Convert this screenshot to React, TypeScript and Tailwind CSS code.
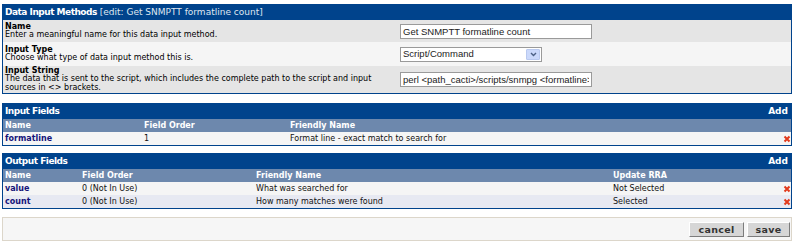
import React from 'react';

// Cacti-style "Data Input Methods" edit page

type Col = { label: string; width: string };

const INPUT_COLS: Col[] = [
  { label: 'Name', width: 'w-[139px]' },
  { label: 'Field Order', width: 'w-[146px]' },
  { label: 'Friendly Name', width: 'flex-1' },
];

const OUTPUT_COLS: Col[] = [
  { label: 'Name', width: 'w-[77px]' },
  { label: 'Field Order', width: 'w-[174px]' },
  { label: 'Friendly Name', width: 'w-[357px]' },
  { label: 'Update RRA', width: 'flex-1' },
];

const INPUT_ROWS = [['formatline', '1', 'Format line - exact match to search for']];

const OUTPUT_ROWS = [
  ['value', '0 (Not In Use)', 'What was searched for', 'Not Selected'],
  ['count', '0 (Not In Use)', 'How many matches were found', 'Selected'],
];

function XIcon() {
  return (
    <svg width="8" height="8" viewBox="0 0 8 8">
      <path d="M1.5 1.5L6.5 6.5M6.5 1.5L1.5 6.5" stroke="#e23a1c" strokeWidth="2" />
    </svg>
  );
}

function Panel({
  title,
  extra,
  add,
  className,
  children,
}: {
  title: string;
  extra?: string;
  add?: boolean;
  className?: string;
  children: React.ReactNode;
}) {
  return (
    <div className={`w-[790px] border border-[#00438C] bg-white ${className ?? ''}`}>
      {/* Header */}
      <div className="flex h-[15px] items-center justify-between bg-[#00438C] pl-[2px] pr-[3px] text-white">
        <div className="whitespace-nowrap text-[9px] leading-[15px]">
          <span className="font-bold tracking-[-0.5px]">{title}</span>
          {extra && <span className="text-[#dfe6f0]"> {extra}</span>}
        </div>
        {add && <span className="text-[9px] font-bold leading-[15px]">Add</span>}
      </div>
      {children}
    </div>
  );
}

function FormRow({
  label,
  desc,
  bg,
  height,
  children,
}: {
  label: string;
  desc: string;
  bg: string;
  height: string;
  children: React.ReactNode;
}) {
  return (
    <div className={`flex items-center ${bg} ${height}`}>
      <div className="w-[397px] pl-[2px] pr-[4px] text-[8px] leading-[8.5px] text-black">
        <div className="font-bold">{label}</div>
        <div>{desc}</div>
      </div>
      <div className="flex items-center">{children}</div>
    </div>
  );
}

function HeaderRow({ cols }: { cols: Col[] }) {
  return (
    <div className="flex h-[13px] items-center bg-[#6D88AD] text-[8px] font-bold leading-[13px] text-white">
      {cols.map((c) => (
        <div key={c.label} className={`${c.width} pl-[2px]`}>
          {c.label}
        </div>
      ))}
      <div className="w-[12px]" />
    </div>
  );
}

function DataRow({ cols, cells, bg }: { cols: Col[]; cells: string[]; bg: string }) {
  return (
    <div className={`flex h-[13px] items-center text-[8px] leading-[13px] text-[#111] ${bg}`}>
      {cols.map((c, i) => (
        <div
          key={c.label}
          className={`${c.width} pl-[2px] ${i === 0 ? 'font-bold text-[#14147a]' : ''}`}
        >
          {cells[i]}
        </div>
      ))}
      <div className="flex w-[12px] justify-end">
        <XIcon />
      </div>
    </div>
  );
}

export default function App() {
  return (
    <div className="h-[251px] w-[800px] overflow-hidden bg-white pl-[2px] pt-[4px] font-['DejaVu_Sans',Verdana,sans-serif]">
      {/* Data input method form */}
      <Panel title="Data Input Methods" extra="[edit: Get SNMPTT formatline count]">
        <FormRow
          label="Name"
          desc="Enter a meaningful name for this data input method."
          bg="bg-[#E5E5E5]"
          height="h-[22px]"
        >
          <input
            readOnly
            value="Get SNMPTT formatline count"
            className="h-[15px] w-[192px] border border-[#9a9a9a] bg-white px-[2px] font-['Liberation_Sans',Arial,sans-serif] text-[9.5px] text-[#222] outline-none"
          />
        </FormRow>
        <FormRow
          label="Input Type"
          desc="Choose what type of data input method this is."
          bg="bg-[#F5F5F5]"
          height="h-[24px]"
        >
          <div className="flex h-[15px] w-[142px] items-center justify-between border border-[#9a9a9a] bg-white pl-[2px] pr-[1px] font-['Liberation_Sans',Arial,sans-serif] text-[9.5px] text-[#222]">
            <span>Script/Command</span>
            <span className="flex h-[11px] w-[14px] items-center justify-center rounded-[1px] border border-[#b9c9ef] bg-[#cbd9fb]">
              <svg width="7" height="5" viewBox="0 0 7 5">
                <path d="M1 1L3.5 3.5L6 1" fill="none" stroke="#4d6185" strokeWidth="1.4" />
              </svg>
            </span>
          </div>
        </FormRow>
        <FormRow
          label="Input String"
          desc="The data that is sent to the script, which includes the complete path to the script and input sources in <> brackets."
          bg="bg-[#E5E5E5]"
          height="h-[27px]"
        >
          <input
            readOnly
            value="perl <path_cacti>/scripts/snmpg <formatline> count"
            className="h-[15px] w-[192px] border border-[#9a9a9a] bg-white px-[2px] font-['Liberation_Sans',Arial,sans-serif] text-[9.5px] text-[#222] outline-none"
          />
        </FormRow>
      </Panel>

      {/* Input fields */}
      <Panel title="Input Fields" add className="mt-[9px]">
        <HeaderRow cols={INPUT_COLS} />
        {INPUT_ROWS.map((r) => (
          <DataRow key={r[0]} cols={INPUT_COLS} cells={r} bg="bg-[#F5F5F5]" />
        ))}
      </Panel>

      {/* Output fields */}
      <Panel title="Output Fields" add className="mt-[7px]">
        <HeaderRow cols={OUTPUT_COLS} />
        {OUTPUT_ROWS.map((r, i) => (
          <DataRow
            key={r[0]}
            cols={OUTPUT_COLS}
            cells={r}
            bg={i % 2 === 0 ? 'bg-[#F5F5F5]' : 'bg-[#E7E9F2]'}
          />
        ))}
      </Panel>

      {/* Actions */}
      <div className="mt-[8px] flex h-[24px] w-[790px] items-center justify-end gap-[3px] border border-[#dcd6ca] bg-[#f6f6f6] pr-[1px]">
        <button className="h-[15px] w-[55px] border border-b-[#7c7c7c] border-l-white border-r-[#7c7c7c] border-t-white bg-[#d6d6d6] text-[9.5px] font-bold leading-[13px] tracking-[0.3px] text-[#333]">
          cancel
        </button>
        <button className="h-[15px] w-[43px] border border-b-[#7c7c7c] border-l-white border-r-[#7c7c7c] border-t-white bg-[#d6d6d6] text-[9.5px] font-bold leading-[13px] tracking-[0.3px] text-[#333]">
          save
        </button>
      </div>
    </div>
  );
}
